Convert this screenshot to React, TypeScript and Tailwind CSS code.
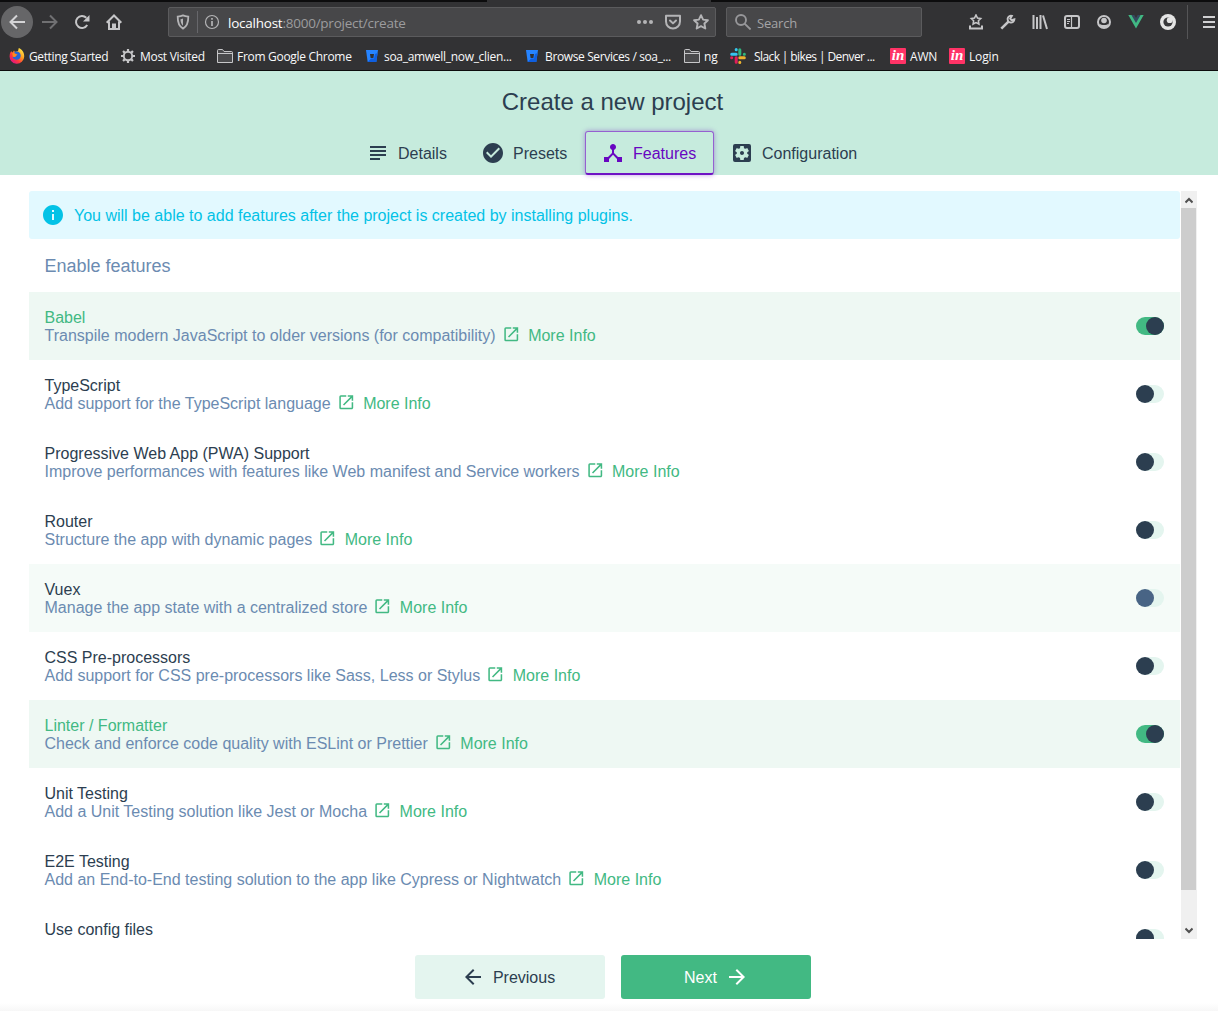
import React from 'react';
import {
  MdArrowBack,
  MdArrowForward,
  MdCheckCircle,
  MdDeviceHub,
  MdInfo,
  MdOpenInNew,
  MdSettingsApplications,
  MdSubject,
} from 'react-icons/md';

const FirefoxIcon = () => (
  <svg className="h-4 w-4" viewBox="0 0 16 16">
    <defs>
      <linearGradient id="fox" x1="0.9" y1="0.1" x2="0.2" y2="0.9">
        <stop offset="0" stopColor="#fff04a" />
        <stop offset="0.4" stopColor="#ff9a1f" />
        <stop offset="0.7" stopColor="#ff3b3b" />
        <stop offset="1" stopColor="#e3187c" />
      </linearGradient>
    </defs>
    <path d="M2.2 3.2 3.6 4.4 5 2.6 6 4l3-1 .8-3c3 1.500 5.600 4.200 5.400 8.400A7.300 7.300 0 1 1 .7 7.200c.1-1.600.7-3 1.500-4z" fill="url(#fox)" />
    <path d="M5.500 3.800c3-1.200 6 .3 6.200 3.600.1 2.700-2 4.600-4.400 4.400-2.200-.2-3.400-1.600-3.600-3.200 1 .8 2.500.5 3.400-.5-1.200-.2-2.200-1-1.600-4.300z" fill="#2466d8" />
    <path d="M3.400 5.200c1.200-.5 2.500 0 3.600.9l1.500.3c-.3 1-1.500 1-1.700 1.800-.8.9-2.300.8-3.100.3z" fill="#ff8a1c" />
  </svg>
);

const GearIcon = () => (
  <svg className="h-4 w-4" viewBox="0 0 16 16" fill="none" stroke="#c6c6c8">
    <circle cx="8" cy="8" r="4.200" strokeWidth="1.900" />
    <path strokeWidth="2.200" d="M8 1v2.500M8 12.500V15M1 8h2.500M12.500 8H15M3.050 3.050l1.800 1.800M11.150 11.150l1.800 1.800M3.050 12.950l1.800-1.800M11.150 4.850l1.800-1.800" />
  </svg>
);

const FolderIcon = () => (
  <svg className="h-4 w-4" viewBox="0 0 16 16" fill="#4a4a4c" stroke="#c6c6c8">
    <path d="M.5 14.500V2.500c0-.6.4-1 1-1h4l1.500 2h7.500c.6 0 1 .4 1 1v10z" />
    <path d="M.5 5.500h15" />
  </svg>
);

const BitbucketIcon = () => (
  <svg className="h-4 w-4" viewBox="0 0 16 16">
    <path d="M2 2h12l-1.700 12H3.700z" fill="#2684ff" />
    <path d="M13.600 5 12.300 14H3.700L7 10.500h3L11 6z" fill="#0f5fe0" />
    <path d="M6 6h4l-.6 4H6.600z" fill="#303032" />
  </svg>
);

const SlackIcon = () => (
  <svg className="h-4 w-4" viewBox="0 0 16 16" fill="none" strokeWidth="3" strokeLinecap="round">
    <path d="M6.200 1.600v.1M1.700 6.200h4.500" stroke="#36c5f0" />
    <path d="M14.400 6.200h-.1M9.800 1.700v4.500" stroke="#2eb67d" />
    <path d="M9.800 14.400v-.1M9.800 9.800h4.500" stroke="#ecb22e" />
    <path d="M1.600 9.800h.1M6.200 9.800v4.500" stroke="#e01e5a" />
  </svg>
);

const InvisionIcon = () => (
  <span className="flex h-4 w-4 items-center justify-center rounded-[1px] bg-[#ff3366] pb-px font-['Liberation_Serif',serif] text-[15px] leading-none font-bold text-white italic">
    in
  </span>
);

const bookmarks = [
  { label: 'Getting Started', icon: <FirefoxIcon />, box: 'w-[111px] gap-1', text: 'tracking-[-0.38px]' },
  { label: 'Most Visited', icon: <GearIcon />, box: 'w-[97px] gap-1', text: 'tracking-[-0.3px]' },
  { label: 'From Google Chrome', icon: <FolderIcon />, box: 'w-[147px] gap-1', text: 'tracking-[-0.3px]' },
  { label: 'soa_amwell_now_clien...', icon: <BitbucketIcon />, box: 'w-[160px] gap-1', text: 'tracking-[-0.3px]' },
  { label: 'Browse Services / soa_...', icon: <BitbucketIcon />, box: 'w-[160px] gap-[5px]', text: 'tracking-[-0.37px]' },
  { label: 'ng', icon: <FolderIcon />, box: 'w-[46px] gap-1', text: 'tracking-[-0.2px]' },
  { label: 'Slack | bikes | Denver ...', icon: <SlackIcon />, box: 'w-[160px] gap-2', text: 'tracking-[-0.6px]' },
  { label: 'AWN', icon: <InvisionIcon />, box: 'w-[59px] gap-1', text: 'tracking-[-0.2px]' },
  { label: 'Login', icon: <InvisionIcon />, box: 'w-[60px] gap-1', text: 'tracking-[-0.15px]' },
];

const ToolButton = ({ children }: { children: React.ReactNode }) => (
  <div className="flex h-8 w-8 shrink-0 items-center justify-center">
    <svg className="h-4 w-4" viewBox="0 0 16 16" fill="none" stroke="#c6c6c8" strokeWidth="2">
      {children}
    </svg>
  </div>
);

const Toolbar = () => (
  <div className="flex h-10 items-center pl-px">
    <div className="mr-px flex h-8 w-8 shrink-0 items-center justify-center rounded-full bg-[#666668]">
      <svg className="h-4 w-4" viewBox="0 0 16 16" fill="none" stroke="#d4d4d6" strokeWidth="2">
        <path d="M16 8H1.500M8 1.500 1.500 8 8 14.500" />
      </svg>
    </div>
    <ToolButton>
      <path d="M0 8h14.500M8 1.500 14.500 8 8 14.500" stroke="#707072" />
    </ToolButton>
    <ToolButton>
      <path d="M13.200 11A6 6 0 1 1 12.300 3.800" />
      <path d="M15.500 1v6.500H9z" fill="#c6c6c8" stroke="none" />
    </ToolButton>
    <ToolButton>
      <path d="M.7 8.700 8 1.500l7.300 7.200M3 7.500V15h10V7.500" />
      <path d="M7 15v-4.500h2V15" />
    </ToolButton>

    <div className="ml-[38px] flex h-[30px] w-[548px] shrink-0 items-center rounded-[2px] border border-[#5b5b5d] bg-[#474749]">
      <svg className="ml-[6px] h-4 w-4" viewBox="0 0 16 16" fill="none" stroke="#b4b4b6" strokeWidth="1.800">
        <path d="M8 1.400c1.800.9 3.500 1.100 5.300 1.200.1 5.400-.6 9.500-5.300 12C3.300 12.100 2.600 8 2.700 2.600 4.500 2.500 6.200 2.300 8 1.400z" />
        <path d="M8 4.500v7.200C6 10 5.600 8 5.500 5.300 6.400 5.200 7.200 5 8 4.500z" fill="#b4b4b6" stroke="none" />
      </svg>
      <div className="ml-[6px] h-[22px] w-px bg-[#67676b]" />
      <svg className="ml-[6px] h-4 w-4" viewBox="0 0 16 16" fill="none" stroke="#b4b4b6">
        <circle cx="8" cy="8" r="6.500" strokeWidth="1.200" />
        <path d="M8 7v5M8 4v1.700" strokeWidth="1.700" />
      </svg>
      <div className="ml-2 flex-1 pt-[2px] text-[13.5px] tracking-[-0.24px] text-[#9c9c9e]">
        <span className="text-white">localhost</span>:8000/project/create
      </div>
      <svg className="mr-[12px] h-4 w-4" viewBox="0 0 16 16" fill="#b4b4b6">
        <circle cx="2" cy="8" r="2" />
        <circle cx="8" cy="8" r="2" />
        <circle cx="14" cy="8" r="2" />
      </svg>
      <svg className="mr-[12px] h-4 w-4" viewBox="0 0 16 16" fill="none" stroke="#b4b4b6" strokeWidth="2" strokeLinecap="round" strokeLinejoin="round">
        <path d="M1 1.800h14v5.700a7 7 0 0 1-14 0z" />
        <path d="M5 6.500 8 9.400l3-2.900" />
      </svg>
      <svg className="mr-[6px] h-4 w-4" viewBox="0 0 16 16" fill="none" stroke="#b4b4b6" strokeWidth="1.900" strokeLinejoin="round">
        <path d="m8 1.200 2.100 4.400 4.800.6-3.500 3.300.9 5L8 12.200l-4.300 2.300.9-5L1.100 6.200l4.800-.6z" />
      </svg>
    </div>

    <div className="ml-[10px] flex h-[30px] w-[196px] shrink-0 items-center rounded-[2px] border border-[#5b5b5d] bg-[#474749]">
      <svg className="ml-[8px] h-4 w-4" viewBox="0 0 16 16" fill="none" stroke="#97979a" strokeWidth="1.900">
        <circle cx="6" cy="6" r="5" />
        <path d="m9.600 9.600 6 5.900" />
      </svg>
      <span className="ml-[6px] pt-[3px] text-[13px] tracking-[-0.2px] text-[#a4a4a6]">Search</span>
    </div>

    <div className="ml-[38px] flex">
      <ToolButton>
        <path d="m8 1 1.500 3 3.200.5-2.300 2.300.5 3.200L8 8.600 5.100 10l.5-3.200-2.300-2.300L6.500 4z" strokeWidth="1.600" />
        <path d="M2 11.500V14.500h12v-3" />
      </ToolButton>
      <ToolButton>
        <path d="m1.300 14.700 7.400-7.400" strokeWidth="2.600" />
        <path d="M11.900 1.900a3.400 3.400 0 1 0 2.500 3.400l-2.900.8-1.300-1.400z" strokeWidth="1.900" />
      </ToolButton>
      <ToolButton>
        <path d="M1.500 1v14M5 3v12M8.500 1v14M11 1.500 15 15" />
      </ToolButton>
      <ToolButton>
        <rect x="1" y="2" width="14" height="12" rx="2" />
        <path d="M7.500 2v12" strokeWidth="1.200" />
        <path d="M3 5.500h3M3 7.500h3M3 9.500h2" strokeWidth="1" />
      </ToolButton>
      <ToolButton>
        <circle cx="8" cy="8" r="6" />
        <circle cx="8" cy="6.500" r="2.800" fill="#c6c6c8" stroke="none" />
        <path d="M3.500 9.700c1.500 1.800 7.500 1.800 9 0-.6 2.900-2.300 4.300-4.500 4.300s-3.900-1.400-4.500-4.300z" fill="#c6c6c8" stroke="none" />
      </ToolButton>
      <ToolButton>
        <path d="M.3 1h5L8 5.600 10.700 1h5L8 14.500z" fill="#41b883" stroke="none" />
        <path d="M3.400 1h2.900L8 3.900 9.700 1h2.900L8 9z" fill="#35495e" stroke="none" />
      </ToolButton>
      <ToolButton>
        <circle cx="8" cy="8" r="8" fill="#e4e4e4" stroke="none" />
        <circle cx="8" cy="8" r="4.600" fill="#38383a" stroke="none" />
        <circle cx="9.700" cy="6.200" r="2.900" fill="#e4e4e4" stroke="none" />
      </ToolButton>
    </div>
    <div className="ml-[3px] h-[34px] w-px bg-[#555557]" />
    <svg className="ml-[14px] h-4 w-4 shrink-0" viewBox="0 0 16 16" stroke="#d0d0d2" strokeWidth="2">
      <path d="M1 3h12M1 8h12M1 13h12" />
    </svg>
  </div>
);

const BrowserChrome = () => (
  <div className="h-[71px] border-b border-[#0c0c0d] bg-[#323234] font-['Open_Sans','Noto_Sans',sans-serif]">
    <div className="flex h-[2px] bg-[#0c0c0d]">
      <div className="ml-[487px] w-[224px] bg-[#323234]" />
    </div>
    <Toolbar />
    <div className="flex h-7 items-center pl-[9px]">
      {bookmarks.map((b) => (
        <div key={b.label} className={`flex shrink-0 items-center ${b.box}`}>
          <span className="shrink-0">{b.icon}</span>
          <span className={`pt-[2px] text-[12px] whitespace-nowrap text-[#f9f9fa] ${b.text}`}>{b.label}</span>
        </div>
      ))}
    </div>
  </div>
);

const tabs = [
  { label: 'Details', icon: MdSubject, width: 'w-[115px] pl-4' },
  { label: 'Presets', icon: MdCheckCircle, width: 'w-[120px] pl-4' },
  { label: 'Features', icon: MdDeviceHub, width: 'w-[129px] pl-[15px]', active: true },
  { label: 'Configuration', icon: MdSettingsApplications, width: 'w-[159px] pl-4' },
];

const Header = () => (
  <div className="h-[104px] bg-[#c6ebdd]">
    <h1 className="h-[60px] pl-[7px] text-center text-[24px] leading-[62px]">Create a new project</h1>
    <div className="flex pl-[350px]">
      {tabs.map(({ label, icon: Icon, width, active }) => (
        <div
          key={label}
          className={`flex h-11 items-center ${width} ${
            active
              ? 'relative rounded-[3px] border border-b-2 border-[#9560d0] border-b-[#6f12c4] text-[#6806c1] shadow-[0_0_5px_rgba(104,6,193,0.4)]'
              : ''
          }`}
        >
          <Icon className="h-6 w-6 shrink-0" />
          <span className="ml-2 pt-[2px]">{label}</span>
        </div>
      ))}
    </div>
  </div>
);

type Feature = { name: string; description: string; enabled?: boolean; hovered?: boolean };

const features: Feature[] = [
  { name: 'Babel', description: 'Transpile modern JavaScript to older versions (for compatibility)', enabled: true },
  { name: 'TypeScript', description: 'Add support for the TypeScript language' },
  { name: 'Progressive Web App (PWA) Support', description: 'Improve performances with features like Web manifest and Service workers' },
  { name: 'Router', description: 'Structure the app with dynamic pages' },
  { name: 'Vuex', description: 'Manage the app state with a centralized store', hovered: true },
  { name: 'CSS Pre-processors', description: 'Add support for CSS pre-processors like Sass, Less or Stylus' },
  { name: 'Linter / Formatter', description: 'Check and enforce code quality with ESLint or Prettier', enabled: true },
  { name: 'Unit Testing', description: 'Add a Unit Testing solution like Jest or Mocha' },
  { name: 'E2E Testing', description: 'Add an End-to-End testing solution to the app like Cypress or Nightwatch' },
  { name: 'Use config files', description: '' },
];

const Switch = ({ enabled, hovered }: { enabled?: boolean; hovered?: boolean }) => (
  <div className={`flex h-[18px] w-7 rounded-full ${enabled ? 'justify-end bg-[#42b983]' : 'bg-[#e4f5ef]'}`}>
    <div className={`h-[18px] w-[18px] rounded-full ${hovered ? 'bg-[#486485]' : 'bg-[#2c3e50]'}`} />
  </div>
);

const FeatureRow = ({ name, description, enabled, hovered }: Feature) => (
  <div
    className={`flex h-[68px] shrink-0 items-center justify-between pr-4 pl-[15.5px] ${
      enabled ? 'bg-[#eef8f3]' : hovered ? 'bg-[#f5fbf8]' : ''
    }`}
  >
    <div className="h-[34px] leading-[18px]">
      <div className={enabled ? 'text-[#42b983]' : ''}>{name}</div>
      {description && (
        <div className="flex h-[18px] items-center text-[#6b8bb1]">
          {description}
          <a className="ml-[6px] flex items-center text-[#42b983]">
            <MdOpenInNew className="-mt-1 mr-[8px] h-[18.500px] w-[18.500px]" />
            More Info
          </a>
        </div>
      )}
    </div>
    <Switch enabled={enabled} hovered={hovered} />
  </div>
);

const Scrollbar = () => (
  <div className="ml-px flex w-4 flex-col bg-[#f0f0f0]">
    <div className="flex h-[17px] w-[15px] items-center justify-center pt-px">
      <svg className="h-[7px] w-2" viewBox="0 0 8 7" fill="none" stroke="#505050" strokeWidth="2">
        <path d="M.5 5.500 4 2l3.500 3.500" />
      </svg>
    </div>
    <div className="h-[682px] w-[15px] bg-[#cdcdcd]" />
    <div className="mt-auto flex h-[17px] w-[15px] items-center justify-center">
      <svg className="h-[7px] w-2" viewBox="0 0 8 7" fill="none" stroke="#505050" strokeWidth="2">
        <path d="M.5 1.500 4 5l3.500-3.500" />
      </svg>
    </div>
  </div>
);

const App = () => {
  return (
    <div className="flex h-[1011px] w-[1218px] flex-col overflow-hidden bg-white font-['Liberation_Sans',Arial,sans-serif] text-[16px] text-[#2c3e50]">
      <BrowserChrome />
      <Header />
      <div className="mt-4 ml-[29px] flex h-[748px] w-[1168px] shrink-0">
        <div className="flex w-[1151px] flex-col overflow-hidden">
          <div className="flex h-12 shrink-0 items-center rounded-[3px] bg-[#e2f9ff] pl-3 text-[#03c2e6]">
            <MdInfo className="h-6 w-6" />
            <span className="ml-[9px] pt-[2px]">
              You will be able to add features after the project is created by installing plugins.
            </span>
          </div>
          <div className="flex h-[53px] shrink-0 items-center pt-[2px] pl-[15.5px] text-[18px] text-[#6b8bb1]">
            Enable features
          </div>
          {features.map((feature) => (
            <FeatureRow key={feature.name} {...feature} />
          ))}
        </div>
        <Scrollbar />
      </div>
      <div className="mt-4 flex justify-center gap-4 pl-2">
        <button className="flex h-11 w-[190px] items-center justify-center gap-2 rounded-[3px] bg-[#e4f5ef] pr-1">
          <MdArrowBack className="h-6 w-6" />
          <span className="pt-[2px]">Previous</span>
        </button>
        <button className="flex h-11 w-[190px] items-center justify-center gap-2 rounded-[3px] bg-[#42b983] pl-px text-white">
          <span className="pt-[2px]">Next</span>
          <MdArrowForward className="h-6 w-6" />
        </button>
      </div>
      <div className="mt-auto h-2 bg-gradient-to-b from-white to-[#f7f7f7]" />
    </div>
  );
};

export default App;
